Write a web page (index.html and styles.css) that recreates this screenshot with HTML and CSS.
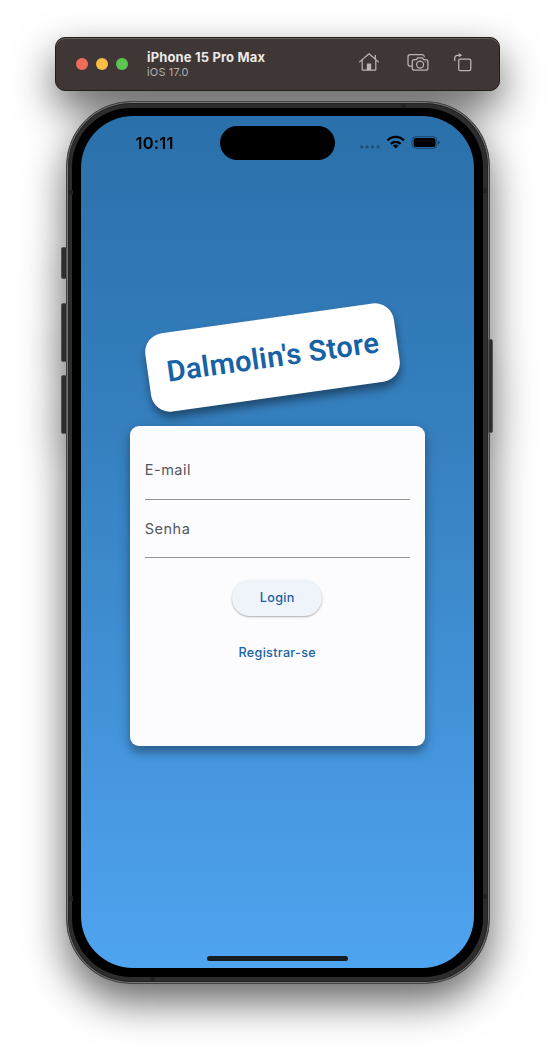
FILE: index.html
```html
<!DOCTYPE html>
<html lang="pt-BR">
<head>
<meta charset="utf-8">
<title>Dalmolin's Store</title>
<link rel="stylesheet" href="styles.css">
</head>
<body>
<main class="simulator">
  <header class="toolbar">
    <div class="lights"><i class="light red"></i><i class="light yellow"></i><i class="light green"></i></div>
    <div class="device">
      <div class="device-name">iPhone 15 Pro Max</div>
      <div class="device-os">iOS 17.0</div>
    </div>
    <div class="actions">
      <svg class="icon" width="22" height="22" viewBox="0 0 22 22">
        <path d="M1.6 10.9 11 2.7l9.4 8.2M4.2 9.2v9.2q0 .8.8.8h12q.8 0 .8-.8V9.2M17.3 8V4.4"/>
        <path class="solid" d="M8.8 12.5h4.4v6.7H8.8z"/>
      </svg>
      <svg class="icon" width="24" height="22" viewBox="0 0 24 22">
        <path d="M5.8 15.2H4.2Q2 15.2 2 13V5.7q0-2.2 2.2-2.2h11.9q2 0 2.2 2"/>
        <path d="M8.3 8.5h2.2l1.3-1.6h4.6l1.3 1.6h2.2q2 0 2 2v6.7q0 2-2 2H8.3q-2 0-2-2v-6.7q0-2 2-2z"/>
        <circle cx="14.1" cy="13.6" r="3.5"/><circle class="solid" cx="19.3" cy="10.8" r=".6"/>
      </svg>
      <svg class="icon" width="20" height="22" viewBox="0 0 20 22">
        <rect x="5.7" y="8" width="12.1" height="11.7" rx="1.6"/>
        <path d="M1.7 9.5V7.3q0-3 3-3h3.2"/><path class="solid" d="M5.8 2v4.6l3.2-2.3z"/>
      </svg>
    </div>
  </header>

  <section class="phone">
    <i class="key key-action"></i><i class="key key-up"></i><i class="key key-down"></i><i class="key key-power"></i>
    <i class="seam seam-tl"></i><i class="seam seam-tr"></i><i class="seam seam-bl"></i><i class="seam seam-br"></i>
    <i class="seam seam-top"></i><i class="seam seam-bottom"></i>
    <div class="bezel">
      <div class="screen">
        <div class="status">
          <span class="clock">10:11</span>
          <span class="island"></span>
          <svg class="indicators" width="82" height="16" viewBox="0 0 82 16">
            <g opacity=".3"><circle cx="2.7" cy="11.9" r="1.65"/><circle cx="8.1" cy="11.9" r="1.65"/><circle cx="13.6" cy="11.9" r="1.65"/><circle cx="19.1" cy="11.9" r="1.65"/></g>
            <g fill="none" stroke="#000" stroke-width="2.3"><path d="M28.5 5.6a11 11 0 0 1 16.4 0"/><path d="M31.8 8.9a7 7 0 0 1 9.8 0"/></g>
            <path d="M36.7 13.6 33.9 10.8a4.2 4.2 0 0 1 5.6 0z"/>
            <rect x="53" y="1.7" width="25" height="11.6" rx="3.9" fill="none" stroke="#000" opacity=".4"/>
            <rect x="54.6" y="3.1" width="21.9" height="8.8" rx="2.5"/>
            <path d="M79.2 5.5q1.6.7 1.6 2t-1.6 2z" opacity=".45"/>
          </svg>
        </div>
        <div class="content">
          <h1 class="brand">Dalmolin's Store</h1>
          <form class="card">
            <label class="field">E-mail</label>
            <label class="field second">Senha</label>
            <button class="login" type="button">Login</button>
            <a class="register">Registrar-se</a>
          </form>
        </div>
        <div class="home-bar"></div>
      </div>
    </div>
  </section>
</main>
</body>
</html>
```
FILE: styles.css
```css
* { box-sizing: border-box; }
body { margin: 0; background: #fff; font-family: Inter, "Liberation Sans", sans-serif; overflow: hidden; }
.simulator {
  width: 555px;
  height: 1059px;
  padding-top: 37px;
  display: flex;
  flex-direction: column;
  align-items: center;
  filter: drop-shadow(0 18px 20px rgba(0, 0, 0, .6));
}
.toolbar {
  width: 445px;
  height: 54px;
  display: flex;
  align-items: center;
  padding: 0 26px 0 20px;
  background: #3e3735;
  border: 1px solid #211d1c;
  border-radius: 10px;
  box-shadow: inset 0 1px 0 #645e5c;
}
.lights { display: flex; gap: 8px; }
.light { width: 12px; height: 12px; border-radius: 50%; }
.red { background: #f36b5b; }
.yellow { background: #f8bd45; }
.green { background: #5cc454; }
.device { margin-left: 19px; padding-top: 1px; }
.device-name { font-size: 13px; line-height: 15px; font-weight: 700; letter-spacing: .15px; color: #ece9e8; white-space: nowrap; }
.device-os { font-size: 11px; line-height: 14px; letter-spacing: .15px; color: #b5b0ae; }
.actions { margin-left: auto; margin-top: -4px; display: flex; align-items: center; gap: 26px; }
.icon { fill: none; stroke: #bbb6b3; stroke-width: 1.25; stroke-linecap: round; stroke-linejoin: round; }
.icon:last-child { margin-left: -3px; }
.icon .solid { fill: #bbb6b3; stroke: none; }

.phone {
  position: relative;
  width: 424px;
  height: 883px;
  margin-top: 10px;
  padding: 6px 5.5px;
  border-radius: 65px;
  background: #2d2d2d;
  border: 1px solid #454545;
  box-shadow: inset 0 0 0 1px #777, inset 0 0 0 2px #242424;
}
.bezel { height: 100%; padding: 8px 9px 9px 8.5px; background: #000; border-radius: 59px; }
.screen {
  height: 852px;
  display: flex;
  flex-direction: column;
  align-items: center;
  border-radius: 52px;
  background: linear-gradient(#2a70aa, #3680c0 38%, #4fa4f0);
  overflow: hidden;
}
.key { position: absolute; width: 6px; background: #2d2d2d; border: 1px solid #555; border-radius: 2px 0 0 2px; }
.key-action { left: -6px; top: 145px; height: 32px; }
.key-up { left: -6px; top: 201px; height: 59px; }
.key-down { left: -6px; top: 273px; height: 59px; }
.key-power { right: -4px; top: 237px; width: 5px; height: 94px; border-radius: 0 2px 2px 0; }
.seam { position: absolute; background: #222; width: 4px; height: 5px; }
.seam-tl { left: 2px; top: 88px; }
.seam-tr { right: 2px; top: 86px; }
.seam-bl { left: 2px; bottom: 82px; }
.seam-br { right: 2px; bottom: 84px; }
.seam-top, .seam-bottom { width: 5px; height: 4px; }
.seam-top { right: 83px; top: 2px; }
.seam-bottom { left: 83px; bottom: 2px; }

.status {
  width: 100%;
  height: 54px;
  display: grid;
  grid-template-columns: 139px 115px 1fr;
  padding-top: 10px;
}
.clock { padding: 6px 0 0 55px; font-size: 16.5px; line-height: 22px; font-weight: 600; letter-spacing: .2px; }
.island { height: 34px; background: #000; border-radius: 17px; }
.indicators { margin: 8.5px 0 0 24px; overflow: visible; }

.content { flex: 1; display: flex; flex-direction: column; align-items: center; padding-top: 148px; }
.brand {
  width: 251px;
  height: 79px;
  margin: 0 9px 29px 0;
  display: flex;
  align-items: center;
  justify-content: center;
  border-radius: 19px;
  background: #fff;
  box-shadow: 0 6px 9px rgba(0, 0, 0, .42);
  color: #1762a5;
  font: 600 29px/1 Roboto, sans-serif;
  letter-spacing: .36px;
  text-indent: 1px;
  white-space: nowrap;
  transform: rotate(-8deg);
}
.card {
  width: 295px;
  height: 320px;
  display: flex;
  flex-direction: column;
  align-items: center;
  padding: 15px;
  border-radius: 9px;
  background: #fcfcff;
  box-shadow: 0 7px 9px rgba(0, 0, 0, .26), 0 3px 14px rgba(0, 0, 0, .16);
}
.field {
  width: 265px;
  height: 58.5px;
  padding-top: 19px;
  border-bottom: 1px solid #929295;
  color: #55575c;
  font-size: 14.5px;
  line-height: 20px;
  letter-spacing: .5px;
}
.login {
  width: 90px;
  height: 36px;
  margin-top: 22px;
  border: 0;
  border-radius: 18px;
  background: #eff3fa;
  box-shadow: 0 1px 2px rgba(0, 0, 0, .32);
}
.login, .register { color: #1762a5; font: 500 12.6px/20px Inter, sans-serif; letter-spacing: .3px; }
.register { margin-top: 27px; }
.home-bar { flex: none; width: 141px; height: 5px; margin-bottom: 7px; border-radius: 3px; background: #171c21; }
```
